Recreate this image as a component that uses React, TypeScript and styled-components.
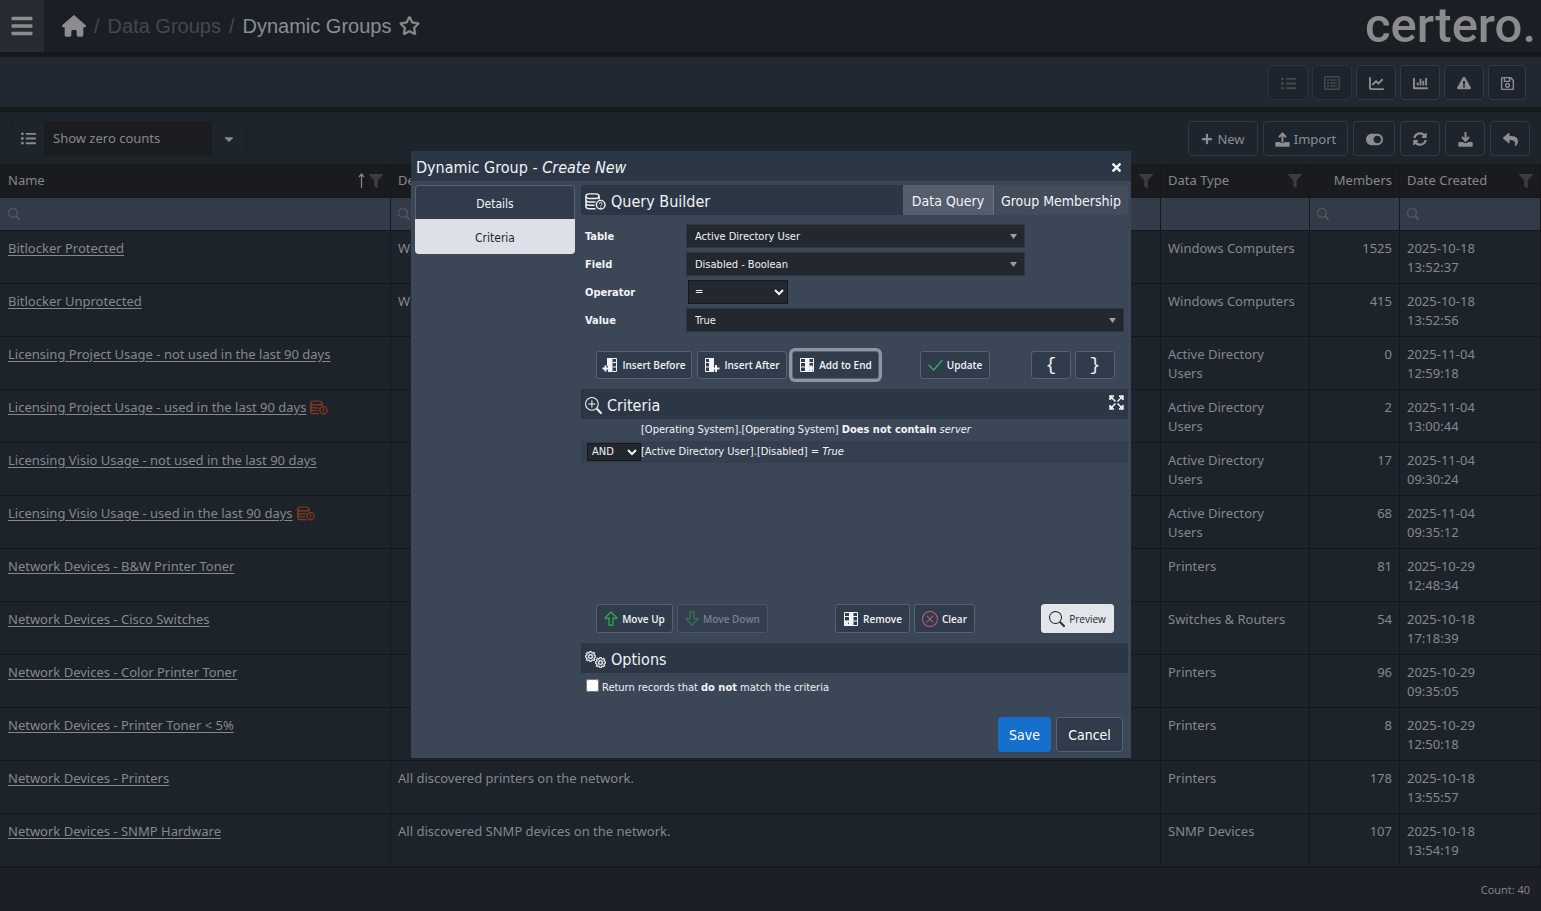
import React from 'react';
import styled, { createGlobalStyle, css } from 'styled-components';
import {
  FaBars,
  FaCaretDown,
  FaChartBar,
  FaExclamationTriangle,
  FaFilter,
  FaListUl,
  FaPlus,
  FaRegListAlt,
  FaRegSave,
  FaRegStar,
  FaReply,
  FaSyncAlt,
  FaTimes,
  FaToggleOn,
} from 'react-icons/fa';
import { FaChartLine, FaHouse } from 'react-icons/fa6';
import { BsGear, BsSearch, BsXCircle, BsZoomIn } from 'react-icons/bs';

const pageFont = "'Noto Sans', sans-serif";
const dialogFont = "'DejaVu Sans Condensed', 'Noto Sans', sans-serif";

const GlobalStyle = createGlobalStyle`
  *, *::before, *::after { box-sizing: border-box; }
  html, body { margin: 0; background: #1c1f26; }
  body { font-family: ${pageFont}; font-size: 13px; line-height: 19px; color: #86888b; }
  button, input, select { font: inherit; color: inherit; }
  svg { display: block; flex: none; }
`;

/* ---------- page ---------- */

const Page = styled.div`
  min-height: 100vh;
  display: flex;
  flex-direction: column;
`;

const TopBar = styled.header`
  height: 57px;
  display: flex;
  align-items: stretch;
  background: #1a1f26;
  border-bottom: 5px solid #16191c;
`;

const MenuButton = styled.button`
  width: 44px;
  padding: 0;
  display: flex;
  align-items: center;
  justify-content: center;
  border: 0;
  background: #272c34;
  color: #8c8d8f;
`;

const Breadcrumb = styled.nav`
  flex: 1;
  display: flex;
  align-items: center;
  gap: 8px;
  padding-left: 18px;
  font-family: 'Liberation Sans', sans-serif;
  font-size: 20px;
  line-height: 24px;
  color: #45484c;

  a { color: inherit; text-decoration: none; }
`;

const HomeLink = styled.a`
  && { color: #8c8d8f; }
`;

const Current = styled.span`
  display: flex;
  align-items: center;
  gap: 8px;
  color: #8c8d8f;

  svg { margin-bottom: 2px; stroke: currentColor; stroke-width: 12; overflow: visible; }
`;

const Logo = styled.div`
  display: flex;
  align-items: center;
  padding-right: 5px;
  font-family: Roboto, sans-serif;
  font-size: 49px;
  line-height: 48px;
  font-weight: 500;
  color: #8a8b8d;
`;

const ReportBar = styled.div`
  height: 55px;
  display: flex;
  align-items: center;
  justify-content: flex-end;
  gap: 4px;
  padding: 1px 15px 0 0;
  background: #222831;
  border-bottom: 5px solid #16191c;
`;

const GridBar = styled.div`
  height: 52px;
  display: flex;
  align-items: center;
  justify-content: space-between;
  padding: 1px 11px 0;
  background: #1d242c;
`;

const Group = styled.div<{ $gap?: number }>`
  display: flex;
  align-items: center;
  gap: ${(p) => p.$gap ?? 5}px;
`;

const ToolButton = styled.button<{ $w?: number }>`
  width: ${(p) => p.$w ?? 40}px;
  height: 35px;
  padding: 1px 0 0;
  display: flex;
  align-items: center;
  justify-content: center;
  gap: 4px;
  color: #8c8d8f;
  background: #1e242d;
  border: 1px solid #333a43;
  border-radius: 4px;

  &:disabled { color: #44494f; border-color: #2c333c; }
`;

const ViewPicker = styled.label`
  display: flex;
  align-items: center;
  height: 36px;
  border: 1px solid #1a1f26;
  border-radius: 4px;

  > svg { margin: 0 8px 0 9px; }
`;

const ViewSelect = styled.div`
  display: flex;
  align-items: center;

  select {
    appearance: none;
    width: 168px;
    height: 34px;
    padding: 0 9px;
    border: 0;
    border-radius: 4px;
    background: #1a1c20;
  }
  svg { margin: 0 10px; }
`;

const Grid = styled.table`
  width: 100%;
  table-layout: fixed;
  border-collapse: separate;
  border-spacing: 0;
  background: #1d232a;

  th, td {
    border-right: 1px solid #14181c;
    border-bottom: 1px solid #14181c;
    padding: 7px;
    text-align: left;
    vertical-align: top;
    font-weight: 400;
  }
  th:first-child, td:first-child { padding-left: 8px; }
  tbody td { height: 53px; padding-top: 8px; padding-bottom: 6px; }
`;

const HeadCell = styled.th`
  height: 34px;
  background: #1a1b1e;
`;

const HeadContent = styled.div<{ $end?: boolean }>`
  display: flex;
  align-items: center;
  justify-content: ${(p) => (p.$end ? 'flex-end' : 'space-between')};
`;

const HeadIcons = styled.span`
  display: flex;
  align-items: center;
  gap: 4px;
  svg:last-child { color: #3b3e41; }
`;

const FilterCell = styled.td`
  && {
    height: 33px;
    padding: 0 7px;
    vertical-align: middle;
    background: #323b47;
  }
`;

const FilterBox = styled.label`
  display: flex;
  align-items: center;
  gap: 6px;
  color: #51565d;

  input {
    flex: 1;
    min-width: 0;
    width: 100%;
    height: 30px;
    padding: 0;
    border: 0;
    outline: 0;
    background: transparent;
  }
`;

const NameCell = styled.div`
  display: flex;
  align-items: center;
  gap: 4px;
  white-space: nowrap;

  a { color: #86888b; text-underline-offset: 2px; }
  svg { color: #8a3a1e; }
`;

const NumberCell = styled.td`
  && { text-align: right; }
`;

const Footer = styled.footer`
  flex: 1;
  min-height: 44px;
  display: flex;
  align-items: center;
  justify-content: flex-end;
  padding: 0 11px;
  border-top: 1px solid #14181c;
  font-family: 'Open Sans', sans-serif;
  font-size: 11px;
`;

/* ---------- dialog ---------- */

const Overlay = styled.div`
  position: fixed;
  inset: 0;
  display: flex;
  align-items: center;
  justify-content: center;
`;

const Dialog = styled.section`
  width: 720px;
  max-width: 100%;
  margin: 0 0 2px 1px;
  padding-bottom: 6px;
  background: #3b4757;
  color: #f1f3f5;
  font-family: ${dialogFont};
  font-size: 11px;
  line-height: 16px;
`;

const TitleBar = styled.header`
  height: 30px;
  display: flex;
  align-items: center;
  justify-content: space-between;
  padding: 3px 8px 0 5px;
  background: #2c3746;

  h1 { margin: 0; font-size: 16px; line-height: 20px; font-weight: 400; }
`;

const CloseButton = styled.button`
  padding: 0;
  border: 0;
  background: none;
`;

const Body = styled.div`
  display: flex;
  gap: 6px;
  padding: 4px 3px 0 4px;
`;

const SideTabs = styled.div`
  width: 160px;
  display: flex;
  flex-direction: column;
`;

const SideTab = styled.button<{ $active?: boolean }>`
  height: 34px;
  padding: 2px 0 0;
  font-size: 12px;
  border: 1px solid #566270;
  border-bottom: 0;
  border-radius: 4px 4px 0 0;
  background: #303c4c;

  ${(p) =>
    p.$active &&
    css`
      height: 35px;
      border: 0;
      border-radius: 0 0 4px 4px;
      background: #dde0e6;
      color: #23282f;
    `}
`;

const Panel = styled.div`
  flex: 1;
  min-width: 0;
`;

const SectionBar = styled.div`
  height: 30px;
  display: flex;
  align-items: center;
  justify-content: space-between;
  background: #2c3746;
`;

const SectionTitle = styled.h2`
  margin: 0;
  padding: 3px 0 0 4px;
  display: flex;
  align-items: center;
  gap: 5px;
  font-size: 16px;
  line-height: 20px;
  font-weight: 400;
`;

const ModeTabs = styled.div`
  align-self: stretch;
  display: flex;
`;

const ModeTab = styled.button<{ $active?: boolean }>`
  width: ${(p) => (p.$active ? 91 : 134)}px;
  padding: 2px 0 0;
  font-size: 14px;
  border: 0;
  border-right: ${(p) => (p.$active ? '1px solid #6b7380' : '0')};
  background: ${(p) => (p.$active ? '#555e6c' : '#424c5b')};
`;

const Form = styled.div`
  display: grid;
  grid-template-columns: 101px 1fr;
  grid-auto-rows: 24px;
  row-gap: 4px;
  align-items: center;
  padding: 9px 4px 0 4px;

  > label { padding-top: 2px; font-weight: 700; }
`;

const SelectBox = styled.div<{ $w?: number; $h?: number }>`
  width: ${(p) => (p.$w ? `${p.$w}px` : '100%')};
  height: ${(p) => p.$h ?? 24}px;
  display: grid;
  align-items: center;
  background: #23282f;

  > * { grid-area: 1 / 1; }
  select {
    appearance: none;
    width: 100%;
    height: 100%;
    padding: 2px 8px 0;
    border: 1px solid #2f3945;
    border-radius: 0;
    background: transparent;
  }
  svg {
    justify-self: end;
    margin-right: 8px;
    color: #9aa0a6;
    pointer-events: none;
  }
`;

const NativeSelect = styled(SelectBox)<{ $pad?: number }>`
  border: 1px solid #15191e;
  margin-left: ${(p) => (p.$pad === undefined ? 2 : 0)}px;
  select { border: 0; padding: 0 ${(p) => p.$pad ?? 6}px; }
  svg { color: #f1f3f5; margin-right: 3px; }
`;

const ActionRow = styled.div`
  display: flex;
  align-items: center;
  padding: 0 13px 0 15px;
  margin-bottom: 10px;
`;

const QueryActions = styled(ActionRow)`
  margin-top: 19px;
  > :nth-child(2) { margin-left: 41px; }
  > :last-child { margin-left: auto; }
`;

const CriteriaActions = styled(ActionRow)`
  padding-right: 14px;
  > :nth-child(2) { margin-left: 67px; }
  > :last-child { margin-left: auto; }
`;

const ActionButton = styled.button<{ $w: number; $focus?: boolean; $light?: boolean }>`
  width: ${(p) => p.$w}px;
  height: 28px;
  padding: 0;
  display: flex;
  align-items: center;
  justify-content: center;
  gap: 4px;
  font-family: 'Open Sans', sans-serif;
  font-size: 10px;
  font-weight: ${(p) => (p.$light ? 400 : 600)};
  white-space: nowrap;
  color: ${(p) => (p.$light ? '#23282f' : '#f1f3f5')};
  background: ${(p) => (p.$light ? '#e2e5ea' : '#303c4c')};
  border: 1px solid ${(p) => (p.$light ? '#e2e5ea' : '#566270')};
  border-radius: 3px;
  box-shadow: ${(p) => (p.$focus ? '0 0 0 3px #8d959f' : 'none')};

  ${CriteriaActions} & { height: 29px; }
  &:disabled { color: #77818d; background: #344050; border-color: #4b5766; }
  &:disabled svg { opacity: 0.5; }
`;

const BraceButton = styled(ActionButton)`
  font-family: 'Liberation Mono', monospace;
  font-size: 18px;
  font-weight: 400;
`;

const CriteriaList = styled.div`
  min-height: 185px;
`;

const CriteriaRow = styled.div<{ $alt?: boolean }>`
  height: 22px;
  display: grid;
  grid-template-columns: 54px 1fr;
  align-items: center;
  padding: 0 0 0 6px;
  background: ${(p) => (p.$alt ? '#34404f' : 'transparent')};
`;

const OptionRow = styled.label`
  height: 26px;
  display: flex;
  align-items: center;
  gap: 3px;
  padding-left: 5px;
  border-bottom: 1px solid #364252;

  input { width: 13px; height: 13px; margin: 0; }
  span { padding-top: 4px; }
`;

const ExpandButton = styled(CloseButton)`
  margin: 0 4px 4px 0;
`;

const DialogFooter = styled.footer`
  display: flex;
  justify-content: flex-end;
  gap: 5px;
  padding: 18px 8px 0;
`;

const FooterButton = styled.button<{ $primary?: boolean }>`
  width: ${(p) => (p.$primary ? 53 : 67)}px;
  height: 35px;
  padding: 0;
  font-size: 14px;
  color: #fff;
  background: ${(p) => (p.$primary ? '#156fcb' : '#303c4c')};
  border: 1px solid ${(p) => (p.$primary ? '#156fcb' : '#566270')};
  border-radius: 3px;
`;

/* ---------- icons ---------- */

const stroke = { fill: 'none', stroke: 'currentColor' } as const;

const DatabaseIcon = ({ mark, size }: { mark: '?' | '!'; size: number }) => (
  <svg width={size} height={Math.round((size * 17) / 21)} viewBox="0 0 21 17" {...stroke} strokeWidth="1.4">
    <path d="M.9 3.200C.9 1.600 2.500.9 4.500.9h6c2 0 3.600.7 3.600 2.300s-1.600 2.300-3.600 2.300h-6C2.500 5.500.9 4.800.9 3.200z" />
    <path d="M.9 3.200v10.200c0 1.600 1.600 2.300 3.600 2.300h6M14.100 3.200v3.400M.9 6.700C.9 8.300 2.500 9 4.500 9h6M.9 10c0 1.600 1.600 2.300 3.600 2.300h5" />
    <circle cx="15.700" cy="11.700" r="4.300" />
    {mark === '?' ? (
      <path d="M14.200 10.800c0-1.900 3-1.900 3 0 0 1-1.500 1-1.500 2.100M15.700 13.600v1" strokeWidth="1" />
    ) : (
      <path d="M15.700 9.300v2.900M15.700 13.200v1.200" />
    )}
  </svg>
);

const TrayIcon = ({ up }: { up?: boolean }) => (
  <svg width="15" height="15" viewBox="0 0 15 15" fill="currentColor">
    <path d="M1.500 10h4v1h4v-1h4a1.200 1.200 0 0 1 1.200 1.200v2.300a1.200 1.200 0 0 1-1.200 1.200h-12a1.200 1.200 0 0 1-1.200-1.200v-2.300A1.200 1.200 0 0 1 1.500 10z" />
    {up ? (
      <path d="M7.500 10.500V2M4 5.200l3.500-3.700L11 5.200" fill="none" stroke="currentColor" strokeWidth="2" />
    ) : (
      <path d="M7.500 0v8.500M4 5l3.500 3.700L11 5" fill="none" stroke="currentColor" strokeWidth="2" />
    )}
  </svg>
);

const SortArrow = () => (
  <svg width="7" height="15" viewBox="0 0 7 15" {...stroke}>
    <path d="M3.500 15V1M1 4l2.500-3L6 4" strokeWidth="1.200" />
  </svg>
);

const SmallTriangle = () => (
  <svg width="7" height="5" viewBox="0 0 7 5" fill="currentColor">
    <path d="M0 0h7L3.500 5z" />
  </svg>
);

const Chevron = () => (
  <svg width="10" height="7" viewBox="0 0 10 7" {...stroke} strokeWidth="2">
    <path d="M1 1l4 4 4-4" />
  </svg>
);

type ColumnKind = 'before' | 'after' | 'end' | 'remove';

const ColumnsIcon = ({ kind }: { kind: ColumnKind }) => (
  <svg width="16" height="16" viewBox="0 0 16 16" {...stroke}>
    {kind === 'before' && (
      <>
        <path d="M5.500 1v8M10.500 1.500h4v13h-4M10.500 5.500h4M10.500 10h4" />
        <path d="M6 1h4.500v14H6z" fill="currentColor" stroke="none" />
        <path d="M3.500 8.500v6M.5 11.500h7" strokeWidth="2" />
      </>
    )}
    {kind === 'after' && (
      <>
        <path d="M5 1.500H1.500v13H5M1.500 5.500H5M1.500 10H5" />
        <path d="M5 1h5v14H5z" fill="currentColor" stroke="none" />
        <path d="M12 8v7M8.500 11.500h7" strokeWidth="2" />
      </>
    )}
    {(kind === 'end' || kind === 'remove') && (
      <>
        <path d="M1.500 1.500h13v13h-13zM1.500 5.500h13M1.500 10h13" />
        <path d="M6 1h4.500v14H6z" fill="currentColor" stroke="none" />
        {kind === 'end' ? (
          <path d="M12 8.500v6M9 11.500h6" strokeWidth="2.500" />
        ) : (
          <path d="M1.500 10l4 4.500M5.500 10l-4 4.500" strokeWidth="2" />
        )}
      </>
    )}
  </svg>
);

const CheckIcon = () => (
  <svg width="15" height="12" viewBox="0 0 15 12" fill="none" stroke="#3fae5a" strokeWidth="1.300">
    <path d="M.7 6l5 5L14.300 1" />
  </svg>
);

const ArrowIcon = ({ down }: { down?: boolean }) => (
  <svg width="14" height="15" viewBox="0 0 14 15" fill="none" stroke="#35b04f" strokeWidth="1.200">
    <path
      d={down ? 'M7 14.200l6-6.200-1.500-.8-2.500 1V.8H5v7.400l-2.500-1L1 8z' : 'M7 .8l6 6.200-1.500.8-2.500-1v7.400H5V6.800l-2.500 1L1 7z'}
      strokeLinejoin="round"
    />
  </svg>
);

const ExpandIcon = () => (
  <svg width="15" height="15" viewBox="0 0 15 15" {...stroke} strokeWidth="1.500">
    <path d="M1 5V1h4M10 1h4v4M14 10v4h-4M5 14H1v-4M1.500 1.500l12 12M13.500 1.500l-12 12" />
    <path d="M1 5l4-4M10 1l4 4M14 10l-4 4M5 14l-4-4" strokeWidth="1" />
    <path d="M6 7.500L7.500 6 9 7.500 7.500 9z" fill="#2c3746" stroke="#2c3746" strokeWidth="1" />
  </svg>
);

const GearPair = styled.span`
  display: flex;
  svg { stroke: currentColor; stroke-width: 1; }
  svg + svg { margin: 6px 0 0 -1px; }
`;

/* ---------- data ---------- */

interface Row {
  name: string;
  flagged?: boolean;
  description?: string;
  type: string;
  members: number;
  created: string;
}

const rows: Row[] = [
  { name: 'Bitlocker Protected', description: 'Windows', type: 'Windows Computers', members: 1525, created: '2025-10-18 13:52:37' },
  { name: 'Bitlocker Unprotected', description: 'Windows', type: 'Windows Computers', members: 415, created: '2025-10-18 13:52:56' },
  { name: 'Licensing Project Usage - not used in the last 90 days', type: 'Active Directory Users', members: 0, created: '2025-11-04 12:59:18' },
  { name: 'Licensing Project Usage - used in the last 90 days', flagged: true, type: 'Active Directory Users', members: 2, created: '2025-11-04 13:00:44' },
  { name: 'Licensing Visio Usage - not used in the last 90 days', type: 'Active Directory Users', members: 17, created: '2025-11-04 09:30:24' },
  { name: 'Licensing Visio Usage - used in the last 90 days', flagged: true, type: 'Active Directory Users', members: 68, created: '2025-11-04 09:35:12' },
  { name: 'Network Devices - B&W Printer Toner', type: 'Printers', members: 81, created: '2025-10-29 12:48:34' },
  { name: 'Network Devices - Cisco Switches', type: 'Switches & Routers', members: 54, created: '2025-10-18 17:18:39' },
  { name: 'Network Devices - Color Printer Toner', type: 'Printers', members: 96, created: '2025-10-29 09:35:05' },
  { name: 'Network Devices - Printer Toner < 5%', type: 'Printers', members: 8, created: '2025-10-29 12:50:18' },
  { name: 'Network Devices - Printers', description: 'All discovered printers on the network.', type: 'Printers', members: 178, created: '2025-10-18 13:55:57' },
  { name: 'Network Devices - SNMP Hardware', description: 'All discovered SNMP devices on the network.', type: 'SNMP Devices', members: 107, created: '2025-10-18 13:54:19' },
];

const Stamp = styled.div`
  width: 90px;
`;

const SearchFilter = ({ label }: { label: string }) => (
  <FilterBox>
    <BsSearch size={12} stroke="currentColor" strokeWidth={1} />
    <input aria-label={label} />
  </FilterBox>
);

function GroupsTable() {
  return (
    <Grid>
      <colgroup>
        <col style={{ width: 391 }} />
        <col />
        <col style={{ width: 149 }} />
        <col style={{ width: 90 }} />
        <col style={{ width: 141 }} />
      </colgroup>
      <thead>
        <tr>
          <HeadCell>
            <HeadContent>
              Name
              <HeadIcons><SortArrow /><FaFilter size={14} /></HeadIcons>
            </HeadContent>
          </HeadCell>
          <HeadCell>
            <HeadContent>Description<HeadIcons><FaFilter size={14} /></HeadIcons></HeadContent>
          </HeadCell>
          <HeadCell>
            <HeadContent>Data Type<HeadIcons><FaFilter size={14} /></HeadIcons></HeadContent>
          </HeadCell>
          <HeadCell><HeadContent $end>Members</HeadContent></HeadCell>
          <HeadCell>
            <HeadContent>Date Created<HeadIcons><FaFilter size={14} /></HeadIcons></HeadContent>
          </HeadCell>
        </tr>
        <tr>
          <FilterCell><SearchFilter label="Filter name" /></FilterCell>
          <FilterCell><SearchFilter label="Filter description" /></FilterCell>
          <FilterCell />
          <FilterCell><SearchFilter label="Filter members" /></FilterCell>
          <FilterCell><SearchFilter label="Filter date created" /></FilterCell>
        </tr>
      </thead>
      <tbody>
        {rows.map((row) => (
          <tr key={row.name}>
            <td>
              <NameCell>
                <a href="#group">{row.name}</a>
                {row.flagged && <DatabaseIcon mark="!" size={18} />}
              </NameCell>
            </td>
            <td>{row.description}</td>
            <td>{row.type}</td>
            <NumberCell>{row.members}</NumberCell>
            <td><Stamp>{row.created}</Stamp></td>
          </tr>
        ))}
      </tbody>
    </Grid>
  );
}

function GroupDialog() {
  return (
    <Overlay>
      <Dialog role="dialog" aria-labelledby="dialog-title">
        <TitleBar>
          <h1 id="dialog-title">Dynamic Group - <i>Create New</i></h1>
          <CloseButton aria-label="Close"><FaTimes size={13} /></CloseButton>
        </TitleBar>
        <Body>
          <SideTabs>
            <SideTab>Details</SideTab>
            <SideTab $active>Criteria</SideTab>
          </SideTabs>
          <Panel>
            <SectionBar>
              <SectionTitle><DatabaseIcon mark="?" size={21} />Query Builder</SectionTitle>
              <ModeTabs>
                <ModeTab $active>Data Query</ModeTab>
                <ModeTab>Group Membership</ModeTab>
              </ModeTabs>
            </SectionBar>
            <Form>
              <label htmlFor="table">Table</label>
              <SelectBox $w={339}>
                <select id="table"><option>Active Directory User</option></select>
                <SmallTriangle />
              </SelectBox>
              <label htmlFor="field">Field</label>
              <SelectBox $w={339}>
                <select id="field"><option>Disabled - Boolean</option></select>
                <SmallTriangle />
              </SelectBox>
              <label htmlFor="operator">Operator</label>
              <NativeSelect $w={100}>
                <select id="operator"><option>=</option></select>
                <Chevron />
              </NativeSelect>
              <label htmlFor="value">Value</label>
              <SelectBox>
                <select id="value"><option>True</option></select>
                <SmallTriangle />
              </SelectBox>
            </Form>
            <QueryActions>
              <Group>
                <ActionButton $w={96}><ColumnsIcon kind="before" />Insert Before</ActionButton>
                <ActionButton $w={90}><ColumnsIcon kind="after" />Insert After</ActionButton>
                <ActionButton $w={87} $focus><ColumnsIcon kind="end" />Add to End</ActionButton>
              </Group>
              <ActionButton $w={70}><CheckIcon />Update</ActionButton>
              <Group $gap={4}>
                <BraceButton $w={40}>{'{'}</BraceButton>
                <BraceButton $w={40}>{'}'}</BraceButton>
              </Group>
            </QueryActions>
            <SectionBar>
              <SectionTitle><BsZoomIn size={17} />Criteria</SectionTitle>
              <ExpandButton aria-label="Expand"><ExpandIcon /></ExpandButton>
            </SectionBar>
            <CriteriaList>
              <CriteriaRow>
                <span />
                <span>[Operating System].[Operating System] <b>Does not contain</b> <i>server</i></span>
              </CriteriaRow>
              <CriteriaRow $alt>
                <NativeSelect $w={54} $h={18} $pad={4}>
                  <select aria-label="Join"><option>AND</option></select>
                  <Chevron />
                </NativeSelect>
                <span>[Active Directory User].[Disabled] = <i>True</i></span>
              </CriteriaRow>
            </CriteriaList>
            <CriteriaActions>
              <Group $gap={4}>
                <ActionButton $w={77}><ArrowIcon />Move Up</ActionButton>
                <ActionButton $w={91} disabled><ArrowIcon down />Move Down</ActionButton>
              </Group>
              <Group $gap={4}>
                <ActionButton $w={75}><ColumnsIcon kind="remove" />Remove</ActionButton>
                <ActionButton $w={61}><BsXCircle size={16} color="#c95a78" />Clear</ActionButton>
              </Group>
              <ActionButton $w={73} $light><BsSearch size={16} />Preview</ActionButton>
            </CriteriaActions>
            <SectionBar>
              <SectionTitle>
                <GearPair><BsGear size={11} /><BsGear size={11} /></GearPair>
                Options
              </SectionTitle>
            </SectionBar>
            <OptionRow>
              <input type="checkbox" />
              <span>Return records that <b>do not</b> match the criteria</span>
            </OptionRow>
          </Panel>
        </Body>
        <DialogFooter>
          <FooterButton $primary>Save</FooterButton>
          <FooterButton>Cancel</FooterButton>
        </DialogFooter>
      </Dialog>
    </Overlay>
  );
}

export default function App() {
  return (
    <Page>
      <GlobalStyle />
      <TopBar>
        <MenuButton aria-label="Menu"><FaBars size={24} /></MenuButton>
        <Breadcrumb>
          <HomeLink href="#home" aria-label="Home"><FaHouse size={24} /></HomeLink>
          <span>/</span>
          <a href="#data-groups">Data Groups</a>
          <span>/</span>
          <Current>Dynamic Groups<FaRegStar size={21} /></Current>
        </Breadcrumb>
        <Logo>certero.</Logo>
      </TopBar>
      <ReportBar>
        <ToolButton disabled aria-label="List"><FaListUl size={15} /></ToolButton>
        <ToolButton disabled aria-label="Details"><FaRegListAlt size={16} /></ToolButton>
        <ToolButton aria-label="Trend"><FaChartLine size={15} /></ToolButton>
        <ToolButton aria-label="Chart"><FaChartBar size={15} /></ToolButton>
        <ToolButton aria-label="Alerts"><FaExclamationTriangle size={14} /></ToolButton>
        <ToolButton aria-label="Save view" $w={38}><FaRegSave size={15} /></ToolButton>
      </ReportBar>
      <GridBar>
        <ViewPicker>
          <FaListUl size={15} />
          <ViewSelect>
            <select aria-label="View"><option>Show zero counts</option></select>
            <FaCaretDown size={14} />
          </ViewSelect>
        </ViewPicker>
        <Group>
          <ToolButton $w={70}><FaPlus size={12} />New</ToolButton>
          <ToolButton $w={85}><TrayIcon up />Import</ToolButton>
          <ToolButton $w={42} aria-label="Toggle"><FaToggleOn size={17} /></ToolButton>
          <ToolButton aria-label="Refresh"><FaSyncAlt size={14} /></ToolButton>
          <ToolButton aria-label="Download"><TrayIcon /></ToolButton>
          <ToolButton aria-label="Back"><FaReply size={15} /></ToolButton>
        </Group>
      </GridBar>
      <GroupsTable />
      <Footer>Count: 40</Footer>
      <GroupDialog />
    </Page>
  );
}
